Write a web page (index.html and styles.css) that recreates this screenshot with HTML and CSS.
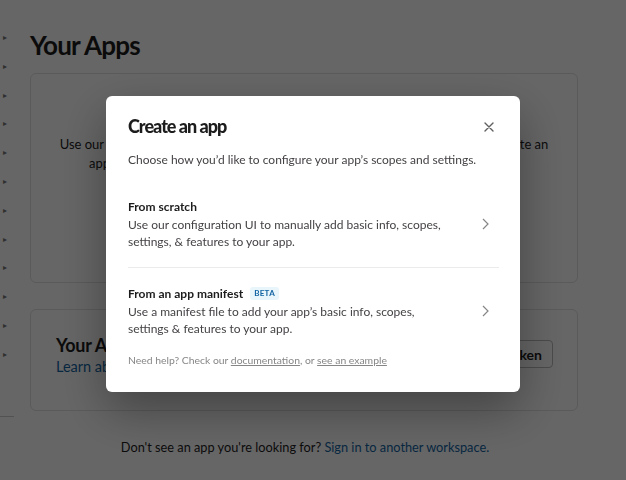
FILE: index.html
```html
<!DOCTYPE html>
<html lang="en">
<head>
<meta charset="utf-8">
<title>Your Apps</title>
<link rel="stylesheet" href="styles.css">
</head>
<body>
<div class="layout">
  <aside class="sidebar">
    <ul class="nav">
      <li>&#9656;</li><li>&#9656;</li><li>&#9656;</li><li>&#9656;</li>
      <li>&#9656;</li><li>&#9656;</li><li>&#9656;</li><li>&#9656;</li>
      <li>&#9656;</li><li>&#9656;</li><li>&#9656;</li><li>&#9656;</li>
    </ul>
  </aside>
  <main class="main">
    <h1 class="page-title">Your Apps</h1>
    <section class="card intro">
      <p class="intro-text">Use our APIs to build an app that makes people’s working life easier. You can create an<br>app that’s just for your workspace, or you can build a distributable Slack app</p>
    </section>
    <section class="card tokens">
      <div class="tokens-text">
        <h2 class="tokens-title">Your App Configuration Tokens</h2>
        <a class="link" href="#">Learn about tokens</a>
      </div>
      <button class="btn">Generate Token</button>
    </section>
    <p class="footer-note">Don't see an app you're looking for? <a class="link" href="#">Sign in to another workspace.</a></p>
  </main>
</div>

<div class="overlay">
  <div class="modal" role="dialog">
    <div class="modal-header">
      <h2 class="modal-title">Create an app</h2>
      <button class="close" aria-label="Close">
        <svg width="10" height="10" viewBox="0 0 10 10"><path d="M1 1L9 9M9 1L1 9" stroke="#616061" stroke-width="1.4" fill="none" stroke-linecap="round"/></svg>
      </button>
    </div>
    <p class="modal-sub">Choose how you’d like to configure your app’s scopes and settings.</p>
    <div class="option first">
      <div class="option-text">
        <div class="option-title">From scratch</div>
        <div class="option-desc">Use our configuration UI to manually add basic info, scopes, settings, &amp; features to your app.</div>
      </div>
      <svg class="chev" width="7" height="12" viewBox="0 0 7 12"><path d="M1 1L6 6L1 11" stroke="#868686" stroke-width="1.2" fill="none"/></svg>
    </div>
    <div class="option second">
      <div class="option-text">
        <div class="option-title">From an app manifest <span class="badge">BETA</span></div>
        <div class="option-desc">Use a manifest file to add your app’s basic info, scopes, settings &amp; features to your app.</div>
      </div>
      <svg class="chev" width="7" height="12" viewBox="0 0 7 12"><path d="M1 1L6 6L1 11" stroke="#868686" stroke-width="1.2" fill="none"/></svg>
    </div>
    <p class="help">Need help? Check our <a href="#">documentation</a>, or <a href="#">see an example</a></p>
  </div>
</div>
</body>
</html>
```

FILE: styles.css
```css
* { box-sizing: border-box; }
html, body { margin: 0; padding: 0; }
body {
  font-family: Lato, "Open Sans", sans-serif;
  color: #1d1c1d;
  background: #fff;
  width: 626px;
  height: 480px;
  overflow: hidden;
}
.layout { display: flex; height: 480px; }
.sidebar {
  width: 14px;
  height: 417px;
  border-bottom: 1px solid #ccc;
  padding-top: 23px;
}
.nav { list-style: none; margin: 0; padding: 0; display: flex; flex-direction: column; }
.nav li { font-size: 8px; line-height: 28.8px; height: 28.8px; color: #777; padding-left: 3px; }
.main { flex: 1; padding: 0 48px 0 16px; }
.page-title {
  margin: 28px 0 0;
  font-size: 26px;
  line-height: 34px;
  font-weight: 700;
  letter-spacing: -0.8px;
}
.card {
  border: 1px solid #e2e2e2;
  border-radius: 6px;
  background: #fff;
}
.intro { margin-top: 11px; height: 210px; padding: 61px 4px 0; }
.intro-text { margin: 0; text-align: center; font-size: 13px; line-height: 19px; white-space: nowrap; }
.tokens {
  margin-top: 26px;
  height: 102px;
  display: flex;
  align-items: center;
  justify-content: space-between;
  padding: 0 24px 11px 25px;
}
.tokens-title { margin: 0; font-size: 18px; line-height: 22px; font-weight: 700; letter-spacing: -0.3px; }
.link { color: #1264a3; text-decoration: none; font-size: 13px; }
.tokens .link { font-size: 14.5px; }
.btn {
  font-family: inherit; font-size: 14px; font-weight: 700; color: #1d1c1d;
  background: #fff; border: 1px solid #bbb; border-radius: 4px;
  height: 28px; padding: 0 10px; margin-bottom: 1px;
}
.footer-note { margin: 27px 0 0; text-align: center; font-size: 12.75px; line-height: 18px; padding-left: 2px; }
.footer-note .link { font-size: inherit; }

.overlay {
  position: fixed; inset: 0;
  background: rgba(0,0,0,0.6);
  display: flex; justify-content: center; align-items: flex-start;
  padding-top: 96px;
}
.modal {
  width: 414px;
  background: #fff;
  border-radius: 6px;
  padding: 16px 21px 25px 22px;
  box-shadow: 0 18px 48px rgba(0,0,0,0.35);
}
.modal-header { display: flex; justify-content: space-between; align-items: center; height: 28px; }
.modal-title { margin: 0; font-size: 18px; line-height: 28px; font-weight: 900; letter-spacing: -1px; }
.close {
  width: 20px; height: 20px; border: 0; background: none; padding: 0;
  display: flex; align-items: center; justify-content: center; margin-top: 2px;
}
.modal-sub { margin: 11px 0 0; font-size: 12px; line-height: 17px; color: #454245; }
.option { display: flex; align-items: center; }
.first { margin-top: 13px; padding: 17px 0 16.5px; border-bottom: 1px solid #ebebeb; }
.second { padding: 17px 0 15.5px; }
.option-text { flex: 1; padding-right: 33px; }
.option-title { font-size: 12px; line-height: 17.5px; font-weight: 700; display: flex; align-items: center; gap: 7px; }
.option-desc { font-size: 12px; line-height: 17.5px; color: #454245; }
.chev { margin-right: 10px; flex: none; }
.badge {
  font-size: 8px; font-weight: 700; color: #1264a3; background: #e8f5fa;
  border-radius: 3px; padding: 1px 4px; line-height: 11px; letter-spacing: 0.3px;
}
.help { margin: 0; font-size: 10.4px; line-height: 14px; color: #868686; }
.help a { color: #868686; text-decoration: underline; }
```
